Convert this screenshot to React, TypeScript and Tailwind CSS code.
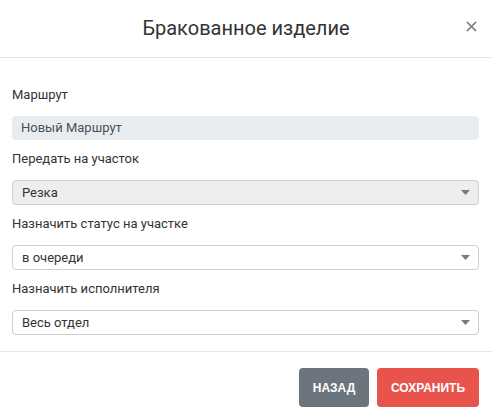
import React from "react";

type Field = {
  label: string;
  value: string;
  kind: "readonly" | "disabled" | "select";
};

const fields: Field[] = [
  { label: "Маршрут", value: "Новый Маршрут", kind: "readonly" },
  { label: "Передать на участок", value: "Резка", kind: "disabled" },
  { label: "Назначить статус на участке", value: "в очереди", kind: "select" },
  { label: "Назначить исполнителя", value: "Весь отдел", kind: "select" },
];

function Caret() {
  return (
    <svg width="9" height="5" viewBox="0 0 9 5" className="shrink-0">
      <path d="M0 0 L9 0 L4.5 5 Z" fill="#7a7a7a" />
    </svg>
  );
}

function FieldBox({ field }: { field: Field }) {
  if (field.kind === "readonly") {
    return (
      <div className="h-[24px] rounded-[4px] bg-[#e9ecef] pl-[9px] flex items-center text-[13px] text-[#495057]">
        {field.value}
      </div>
    );
  }
  const bg = field.kind === "disabled" ? "bg-[#eeeeee]" : "bg-white";
  return (
    <div
      className={`h-[25px] rounded-[4px] border border-[#cfcfcf] ${bg} pl-[9px] pr-[8px] flex items-center justify-between text-[13px] text-[#333]`}
    >
      <span>{field.value}</span>
      <Caret />
    </div>
  );
}

export default function App() {
  return (
    <div
      className="w-[492px] h-[418px] bg-white flex flex-col"
      style={{ fontFamily: "Roboto, 'Liberation Sans', sans-serif" }}
    >
      {/* header */}
      <div className="relative h-[58px] border-b border-[#e5e5e5] flex items-center justify-center shrink-0">
        <h2 className="text-[20px] text-[#333] leading-none pb-[2px]">Бракованное изделие</h2>
        <button className="absolute right-[15px] top-[21px] w-[11px] h-[11px]">
          <svg width="11" height="11" viewBox="0 0 11 11">
            <path d="M1 1 L10 10 M10 1 L1 10" stroke="#777" strokeWidth="1.6" />
          </svg>
        </button>
      </div>

      {/* body */}
      <div className="px-[12px] pr-[13px] pt-[27px] pb-[16px] flex flex-col gap-[9px] border-b border-[#e5e5e5]">
        {fields.map((f) => (
          <div key={f.label} className="flex flex-col">
            <div className="h-[20px] leading-[20px] text-[13px] text-[#333] mb-[11px]">{f.label}</div>
            <FieldBox field={f} />
          </div>
        ))}
      </div>

      {/* footer */}
      <div className="flex justify-end gap-[8px] pt-[16px] pr-[13px]">
        <button
          className="h-[39px] w-[70px] rounded-[4px] bg-[#6c757d] text-white text-[12px] font-bold uppercase"
          style={{ fontFamily: "'Liberation Sans', Arial, sans-serif" }}
        >
          Назад
        </button>
        <button
          className="h-[39px] w-[102px] rounded-[4px] bg-[#e8534c] text-white text-[12px] font-bold uppercase"
          style={{ fontFamily: "'Liberation Sans', Arial, sans-serif" }}
        >
          Сохранить
        </button>
      </div>
    </div>
  );
}
